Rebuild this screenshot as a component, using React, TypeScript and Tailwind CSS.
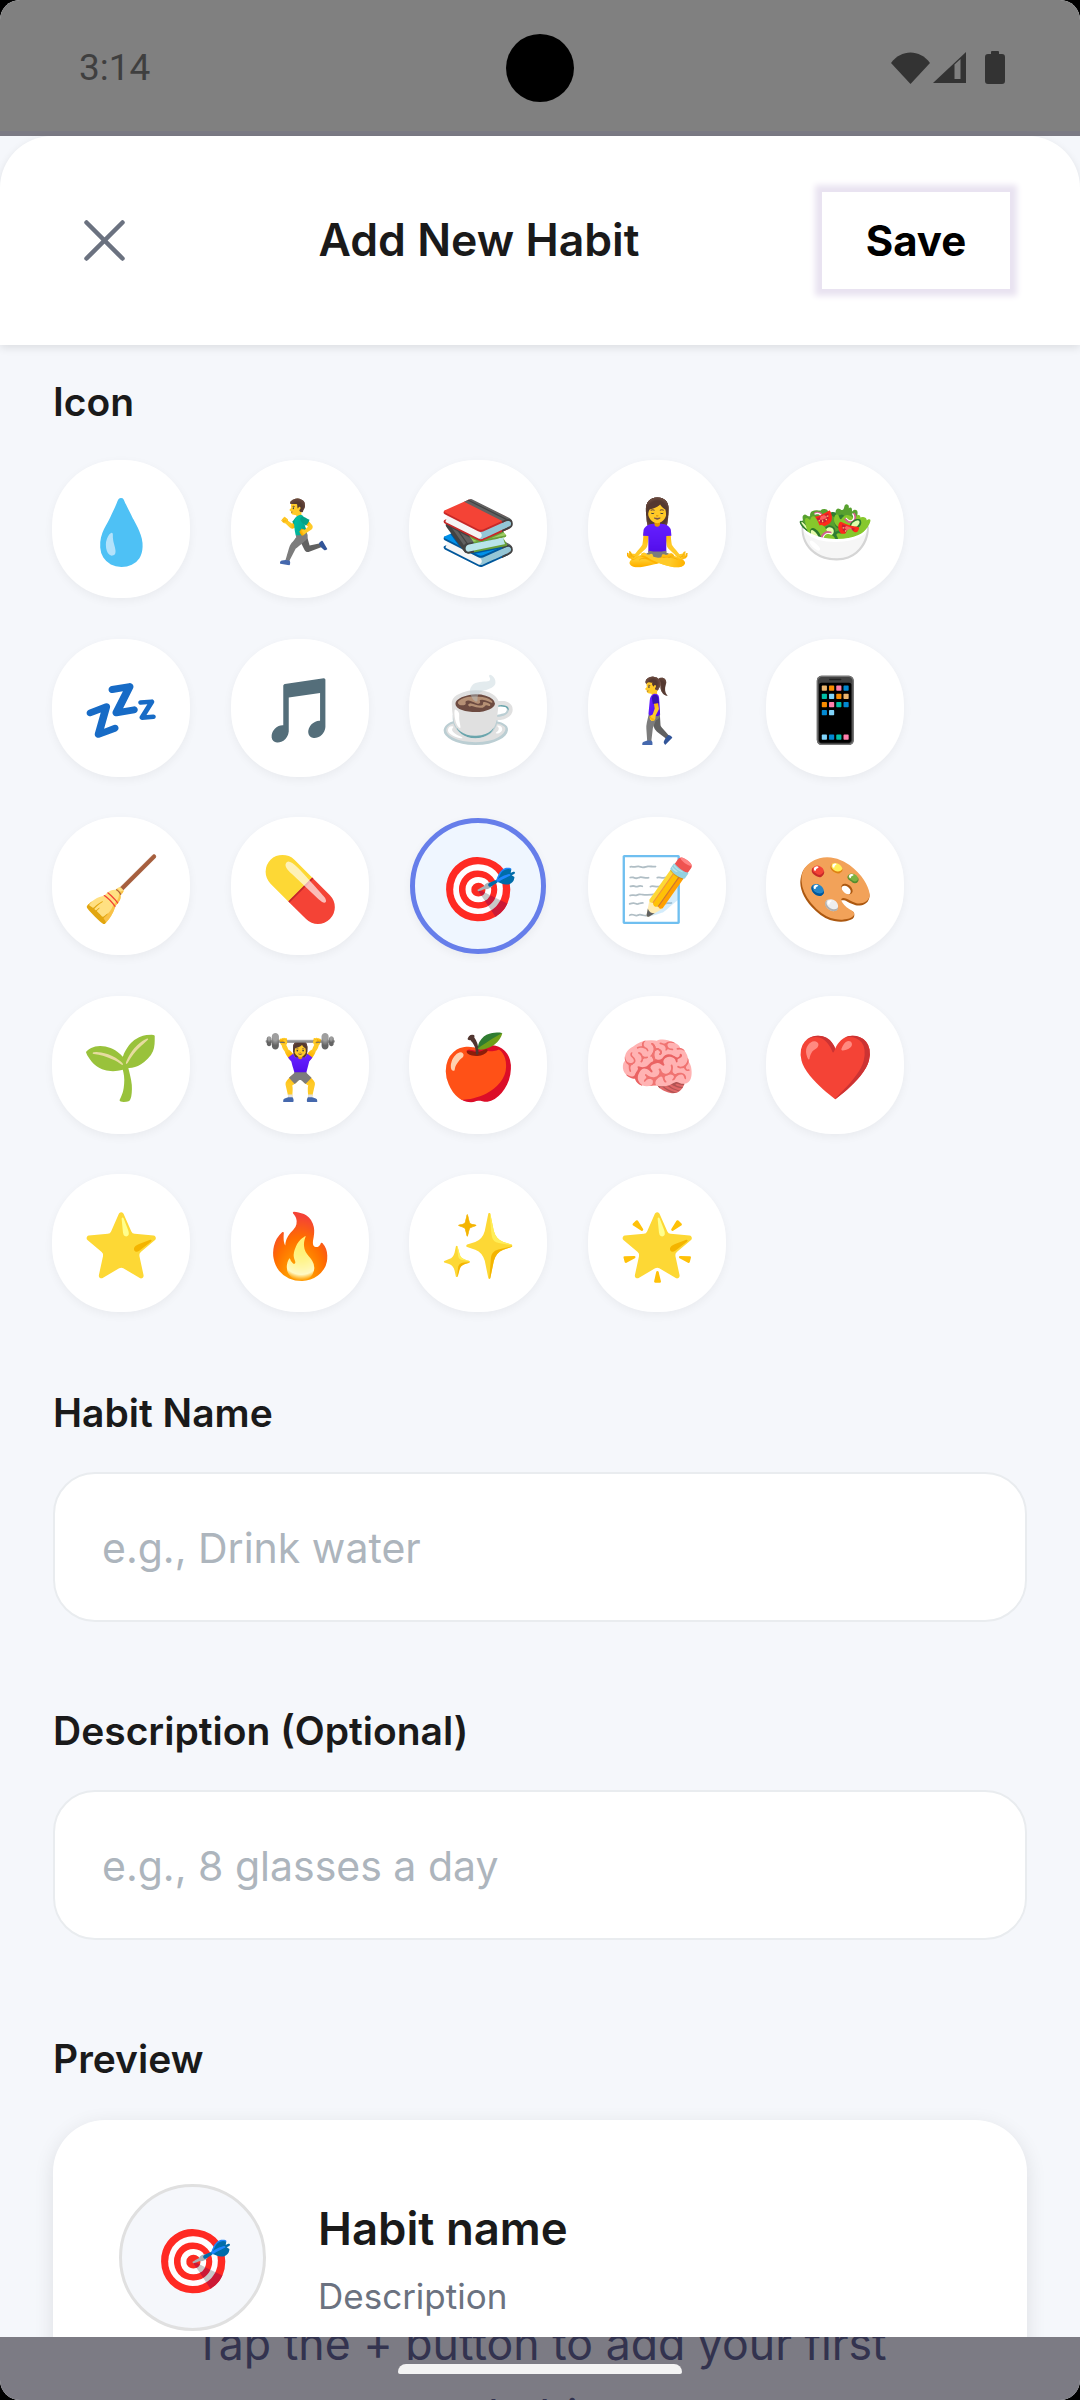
const emojis = ["💧", "🏃‍♂️", "📚", "🧘‍♀️", "🥗", "💤", "🎵", "☕", "🚶‍♀️", "📱", "🧹", "💊", "🎯", "📝", "🎨", "🌱", "🏋️‍♀️", "🍎", "🧠", "❤️", "⭐", "🔥", "✨", "🌟"];

const selected = "🎯";

const StatusIcons = () => (
	<svg width="120" height="36" viewBox="0 0 120 36" className="absolute left-[888px] top-[50px]">
		<path d="M3 13 C 13 -1, 32 -1, 42 13 L 22.5 34 Z" fill="#333333" />
		<path d="M45 33 L78 2 V33 Z" fill="#333333" />
		<path d="M66.5 14.5 L72.5 9 V29 H66.5 Z" fill="#808080" />
		<path d="M103 4 V2 Q103 1 104 1 H110 Q111 1 111 2 V4 H114 Q117 4 117 7 V31 Q117 34 114 34 H100 Q97 34 97 31 V7 Q97 4 100 4 Z" fill="#333333" />
	</svg>
);

const Field = ({ label, placeholder }: { label: string; placeholder: string }) => (
	<div>
		<p className="mb-[33px] text-[39px] leading-[52px] font-semibold text-[#1a1a1a]">{label}</p>
		<input
			placeholder={placeholder}
			className="h-[150px] w-full rounded-[42px] border-[2px] border-[#e9ecef] bg-white px-[47px] pt-[2px] text-[41px] text-[#1a1a1a] placeholder:text-[#adb5bd]"
		/>
	</div>
);

export default function App() {
	return (
		<div className="h-[2400px] w-[1080px] bg-black">
			<div className="relative h-[2400px] w-[1080px] overflow-hidden rounded-[20px] bg-[#f5f7fb] font-['Inter',sans-serif]">
				<div className="h-[136px] border-b-[5px] border-[#7b7a84] bg-[#808080] pl-[79px] pt-[46px]">
					<span className="font-['Roboto',sans-serif] text-[37px] leading-[44px] text-[#3f3f3f]">3:14</span>
				</div>
				<div className="absolute left-[506px] top-[34px] h-[68px] w-[68px] rounded-full bg-black" />
				<StatusIcons />

				<div className="relative z-10 flex h-[209px] items-center justify-between rounded-t-[52px] bg-white pl-[84px] pr-[70px] shadow-[0_3px_8px_rgba(0,0,0,0.1)]">
					<div className="w-[52px]">
						<svg width="41" height="41" viewBox="0 0 41 41" fill="none" stroke="#6b7280" strokeWidth="4.5" strokeLinecap="round">
							<path d="M2.5 2.5 L38.5 38.5 M38.5 2.5 L2.5 38.5" />
						</svg>
					</div>
					<h1 className="text-[44.6px] font-semibold text-[#1a1a1a]">Add New Habit</h1>
					<button className="flex h-[97px] w-[188px] items-center justify-center bg-white text-[42px] font-bold text-black shadow-[0_0_6px_7px_#e9e3f1]">
						Save
					</button>
				</div>

				<div className="px-[53px] pt-[31px]">
					<p className="mb-[32px] text-[39px] leading-[52px] font-semibold text-[#1a1a1a]">Icon</p>
					<div className="-ml-[1px] grid grid-cols-[repeat(5,138px)] gap-x-[40.5px] gap-y-[40.5px]">
						{emojis.map((emoji) =>
							emoji === selected ? (
								<div
									key={emoji}
									className="m-[1px] flex h-[136px] items-center justify-center rounded-full border-[5px] border-[#667eea] bg-[#eff6ff] pt-[4px] text-[63px] shadow-[0_3px_10px_rgba(0,0,0,0.05)]"
								>
									{emoji}
								</div>
							) : (
								<div
									key={emoji}
									className="flex h-[138px] items-center justify-center rounded-[66px] bg-white pt-[4px] text-[63px] shadow-[0_3px_10px_rgba(0,0,0,0.05)]"
								>
									{emoji}
								</div>
							),
						)}
					</div>

					<div className="mt-[75px] flex flex-col gap-[83px]">
						<Field label="Habit Name" placeholder="e.g., Drink water" />
						<Field label="Description (Optional)" placeholder="e.g., 8 glasses a day" />
					</div>

					<p className="mb-[35px] mt-[93px] text-[39px] leading-[52px] font-semibold text-[#1a1a1a]">Preview</p>
					<div className="flex h-[340px] items-start gap-[52px] rounded-[52px] bg-white pl-[66px] pt-[64px] shadow-[0_5px_20px_rgba(0,0,0,0.1)]">
						<div className="flex h-[147px] w-[147px] items-center justify-center rounded-full border-[3px] border-[#e0e0e0] bg-[#f5f7fb] pt-[6px] text-[63px]">
							🎯
						</div>
						<div className="pt-[12px]">
							<p className="text-[45.5px] leading-[66px] font-semibold text-[#1a1a1a]">Habit name</p>
							<p className="mt-[8px] text-[35px] leading-[52px] text-[#6b7280]">Description</p>
						</div>
					</div>
				</div>

				<div className="absolute bottom-0 left-0 z-20 h-[63px] w-full overflow-hidden bg-[#7c7b84]">
					<p className="-mt-[29px] text-center text-[44.6px] leading-[72px] text-[#33334f]">
						Tap the + button to add your first
						<br />
						habit
					</p>
					<div className="absolute left-[398px] top-[27px] h-[10px] w-[284px] rounded-t-[8px] rounded-b-[2px] bg-[#f3f3f3]" />
				</div>
			</div>
		</div>
	);
}
